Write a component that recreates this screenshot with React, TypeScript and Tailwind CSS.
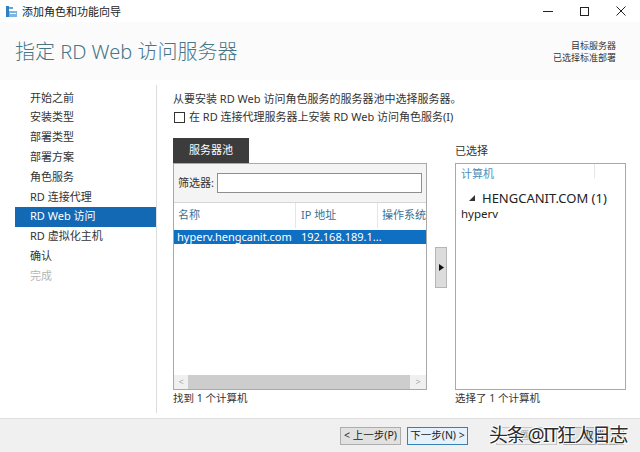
import React from "react";

const F = { fontFamily: "'Noto Sans', 'Noto Sans CJK SC', sans-serif" };

function Btn({ children, primary, disabled }: { children: React.ReactNode; primary?: boolean; disabled?: boolean }) {
  return (
    <div
      className={
        "h-[18px] w-[61px] flex items-center justify-center text-[10.5px] leading-none bg-[#e1e1e1] border whitespace-nowrap " +
        (primary ? "border-[#3c7fb1] bg-[#e5f1fb]" : "border-[#adadad]") +
        (disabled ? " text-[#a0a0a0] bg-[#ececec] border-[#c8c8c8]" : " text-[#222]")
      }
    >
      {children}
    </div>
  );
}

export default function App() {
  const nav = ["开始之前", "安装类型", "部署类型", "部署方案", "角色服务", "RD 连接代理", "RD Web 访问", "RD 虚拟化主机", "确认", "完成"];
  return (
    <div style={F} className="relative w-[640px] h-[452px] bg-white flex flex-col overflow-hidden text-[#222]">
      {/* title bar */}
      <div className="h-[22px] flex items-center bg-white">
        <svg className="ml-[6px]" width="11" height="11" viewBox="0 0 11 11">
          <rect x="0" y="0" width="3" height="11" fill="#2f7fc1" />
          <rect x="3" y="1" width="4" height="2" fill="#5ea6dd" />
          <rect x="3" y="5" width="8" height="6" fill="#7ab6e3" />
          <rect x="4" y="7" width="6" height="1" fill="#fff" />
        </svg>
        <span className="ml-[5px] text-[11px] leading-none text-[#222]">添加角色和功能向导</span>
        <div className="flex-1" />
        <div className="flex items-center">
          <div className="w-[36px] h-[22px] flex items-center justify-center">
            <div className="w-[10px] h-px bg-[#222]" />
          </div>
          <div className="w-[36px] h-[22px] flex items-center justify-center">
            <div className="w-[9px] h-[9px] border border-[#222]" />
          </div>
          <div className="w-[38px] h-[22px] flex items-center justify-center">
            <svg width="10" height="10" viewBox="0 0 10 10">
              <path d="M0.5 0.5 L9.5 9.5 M9.5 0.5 L0.5 9.5" stroke="#222" strokeWidth="1" />
            </svg>
          </div>
        </div>
      </div>

      {/* header */}
      <div className="h-[58px] flex justify-between bg-[#fbfbfb] pl-[15px] pr-[24px]">
        <div className="pt-[18px] text-[20px] leading-[24px] text-[#46768a] font-light">指定 RD Web 访问服务器</div>
        <div className="pt-[18px] text-[9px] leading-[12px] text-right text-[#333]">
          <div>目标服务器</div>
          <div>已选择标准部署</div>
        </div>
      </div>

      {/* body */}
      <div className="flex flex-1 min-h-0">
        <div className="pl-[15px] w-[157px] py-[5px] flex">
          <div className="flex-1 border-r border-[#dcdcdc] pt-[3px]">
            {nav.map((n, i) => (
              <div
                key={n}
                className={
                  "h-[19.8px] flex items-center pl-[15px] text-[11px] " +
                  (i === 6 ? "bg-[#1369b4] text-white" : i === 9 ? "text-[#b5b5b5]" : "text-[#333]")
                }
              >
                {n}
              </div>
            ))}
          </div>
        </div>

        <div className="flex-1 pl-[16px] pt-[12px] flex flex-col">
          <div className="text-[11px] leading-[14px] text-[#333]">从要安装 RD Web 访问角色服务的服务器池中选择服务器。</div>
          <div className="mt-[4px] h-[14px] flex items-center text-[11px] text-[#333]">
            <div className="ml-[1px] w-[11px] h-[11px] border border-[#333] bg-white" />
            <span className="ml-[4px]">在 RD 连接代理服务器上安装 RD Web 访问角色服务(I)</span>
          </div>

          <div className="mt-[14px] flex">
            {/* left */}
            <div className="w-[254px] flex flex-col">
              <div className="w-[76px] h-[25px] bg-[#3c3c3c] text-white text-[11px] flex items-center justify-center">服务器池</div>
              <div className="h-[227px] border border-[#a9a9a9] flex flex-col">
                <div className="h-[39px] bg-[#f4f4f4] border-b border-[#d6d6d6] flex items-center px-[4px]">
                  <span className="text-[11px] text-[#333]">筛选器:</span>
                  <div className="ml-[3px] flex-1 h-[20px] bg-white border border-[#8f8f8f]" />
                </div>
                <div className="h-[25px] flex items-center text-[11px] text-[#3a6f95]">
                  <div className="w-[122px] pl-[4px] h-full flex items-center border-r border-[#e6e6e6]">名称</div>
                  <div className="w-[82px] pl-[5px] h-full flex items-center border-r border-[#e6e6e6]">IP 地址</div>
                  <div className="flex-1 pl-[4px] h-full flex items-center whitespace-nowrap overflow-hidden">操作系统</div>
                </div>
                <div className="mt-[2px] h-[14px] bg-[#0f6fc2] text-white text-[11px] flex items-center whitespace-nowrap">
                  <div className="w-[122px] pl-[3px]">hyperv.hengcanit.com</div>
                  <div className="pl-[5px]">192.168.189.1...</div>
                </div>
                <div className="flex-1" />
                <div className="h-[14px] bg-[#f0f0f0] flex items-center">
                  <div className="w-[14px] text-center text-[9px] text-[#a8a8a8]">&lt;</div>
                  <div className="flex-1 h-[14px] bg-[#cdcdcd]" />
                  <div className="w-[16px] text-center text-[9px] text-[#a8a8a8]">&gt;</div>
                </div>
              </div>
              <div className="h-[14px] mt-[1px] text-[10.5px] leading-[14px] text-[#333]">找到 1 个计算机</div>
            </div>

            {/* arrow */}
            <div className="w-[28px] flex items-start justify-center pt-[109px]">
              <div className="w-[12px] h-[41px] bg-[#dcdcdc] border border-[#b5b5b5] flex items-center justify-center">
                <svg width="5" height="7" viewBox="0 0 5 7"><path d="M0 0 L5 3.5 L0 7 Z" fill="#111" /></svg>
              </div>
            </div>

            {/* right */}
            <div className="w-[171px] flex flex-col">
              <div className="h-[25px] flex items-end pb-[4px] text-[11px] text-[#333]">已选择</div>
              <div className="h-[227px] border border-[#a9a9a9] flex flex-col">
                <div className="h-[20px] flex items-center relative">
                  <span className="pl-[5px] text-[11px] text-[#4f8fba]">计算机</span>
                  <div className="absolute left-[138px] top-0 h-[14px] w-px bg-[#e6e6e6]" />
                </div>
                <div className="mt-[5px] h-[18px] flex items-center">
                  <svg className="ml-[13px]" width="6" height="6" viewBox="0 0 6 6"><path d="M6 0 L6 6 L0 6 Z" fill="#333" /></svg>
                  <span className="ml-[7px] text-[13px] leading-none text-[#222]">HENGCANIT.COM (1)</span>
                </div>
                <div className="h-[14px] pl-[5px] text-[11.5px] leading-[14px] text-[#222]">hyperv</div>
              </div>
              <div className="h-[14px] mt-[1px] text-[10.5px] leading-[14px] text-[#333]">选择了 1 个计算机</div>
            </div>
          </div>
        </div>
      </div>

      {/* footer */}
      <div className="h-[34px] bg-[#f0f0f0] border-t border-[#dfdfdf] flex items-center justify-end pr-[16px]">
        <Btn>&lt; 上一步(P)</Btn>
        <div className="w-[6px]" />
        <Btn primary>下一步(N) &gt;</Btn>
        <div className="w-[28px]" />
        <Btn disabled>部署(D)</Btn>
        <div className="w-[6px]" />
        <Btn>取消</Btn>
      </div>

      {/* watermark */}
      <div
        className="absolute right-[13px] bottom-[7px] text-[19px] leading-none tracking-[-1.5px] text-[#2b2b2b] whitespace-nowrap"
        style={{ textShadow: "0 0 2px #fff, 1px 1px 0 #fff, -1px -1px 0 #fff" }}
      >
        头条 @IT狂人日志
      </div>
    </div>
  );
}
